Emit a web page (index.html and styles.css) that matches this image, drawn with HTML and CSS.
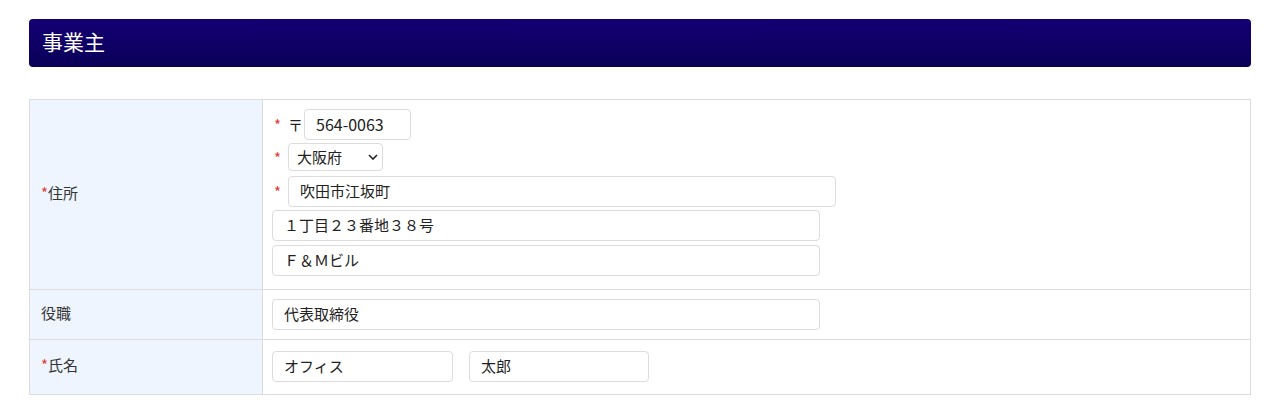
FILE: index.html
```html
<!DOCTYPE html>
<html lang="ja">
<head>
<meta charset="utf-8">
<title>事業主</title>
<link rel="stylesheet" href="styles.css">
</head>
<body>
<div class="page">
  <h2 class="section-title">事業主</h2>
  <table class="form-table">
    <tr class="row-address">
      <th><span class="req">*</span>住所</th>
      <td>
        <div class="line"><span class="req-mark">*</span><span class="zip-mark">〒</span><input class="input zip" type="text" value="564-0063"></div>
        <div class="line line-select"><span class="req-mark">*</span><span class="select-wrap"><select class="select"><option>大阪府</option></select><svg class="chev" width="10" height="6" viewBox="0 0 10 6"><path d="M1 1l4 4 4-4" fill="none" stroke="#222" stroke-width="1.6"/></svg></span></div>
        <div class="line line-city"><span class="req-mark">*</span><input class="input wide" type="text" value="吹田市江坂町"></div>
        <div class="line line-a2"><input class="input wide" type="text" value="１丁目２３番地３８号"></div>
        <div class="line line-a3"><input class="input wide" type="text" value="Ｆ＆Ｍビル"></div>
      </td>
    </tr>
    <tr class="row-role">
      <th>役職</th>
      <td><input class="input wide" type="text" value="代表取締役"></td>
    </tr>
    <tr class="row-name">
      <th><span class="req">*</span>氏名</th>
      <td><div class="names"><input class="input name" type="text" value="オフィス"><input class="input name name-given" type="text" value="太郎"></div></td>
    </tr>
  </table>
</div>
</body>
</html>
```

FILE: styles.css
```css
* { box-sizing: border-box; }
html, body { margin: 0; padding: 0; background: #fff; }
body {
  font-family: "Noto Sans CJK JP", "Noto Sans", sans-serif;
  color: #333;
  font-size: 15px;
}
.page { padding: 19px 29px 0 29px; width: 1280px; }
.section-title {
  margin: 0;
  height: 48px;
  width: 1222px;
  border-radius: 4px;
  background: linear-gradient(#140074, #0a0058);
  color: #fff;
  font-size: 21px;
  font-weight: normal;
  line-height: 45px;
  padding-left: 13px;
}
.form-table {
  margin-top: 32px;
  width: 1222px;
  border-collapse: collapse;
  border: 1px solid #dcdcdc;
}
.form-table th, .form-table td { border: 1px solid #dcdcdc; vertical-align: middle; }
.form-table th {
  width: 233px;
  background: #eef5fe;
  text-align: left;
  font-weight: normal;
  padding: 0 0 5px 11px;
  font-size: 15px;
  color: #333;
}
.form-table td { padding: 0 0 0 9px; }
.req { color: #e53935; font-size: 15px; }
.row-address td { padding-top: 8px; padding-bottom: 12px; }
.row-address th, .row-address td { height: 190px; }
.row-role th, .row-role td { height: 50px; }
.row-name th, .row-name td { height: 55px; }
.row-name td { padding-bottom: 2px; }
.line { display: flex; align-items: center; }
.line-select { margin-top: 3px; }
.line-city { margin-top: 5px; }
.line-a2 { margin-top: 3px; }
.line-a3 { margin-top: 4px; }
.req-mark { width: 16px; color: #e53935; font-size: 15px; text-align: left; padding-left: 2px; }
.zip-mark { width: 16px; font-size: 15px; color: #222; }
.input {
  height: 31px;
  border: 1px solid #dcdcdc;
  border-radius: 4px;
  padding: 0 11px 2px 11px;
  font-family: "Noto Sans CJK JP", "Noto Sans", sans-serif;
  font-size: 15px;
  color: #222;
  background: #fff;
  outline: none;
}
.zip { width: 107px; font-size: 16px; }
.wide { width: 548px; }
.names { display: flex; gap: 16px; }
.name { width: 181px; }
.name-given { width: 180px; }
.select-wrap { position: relative; display: inline-block; }
.select {
  appearance: none;
  -webkit-appearance: none;
  width: 95px;
  height: 28px;
  border: 1px solid #dcdcdc;
  border-radius: 4px;
  padding: 0 0 2px 8px;
  font-family: "Noto Sans CJK JP", "Noto Sans", sans-serif;
  font-size: 15px;
  color: #222;
  background: #fff;
}
.chev { position: absolute; right: 5px; top: 11px; pointer-events: none; }
```
